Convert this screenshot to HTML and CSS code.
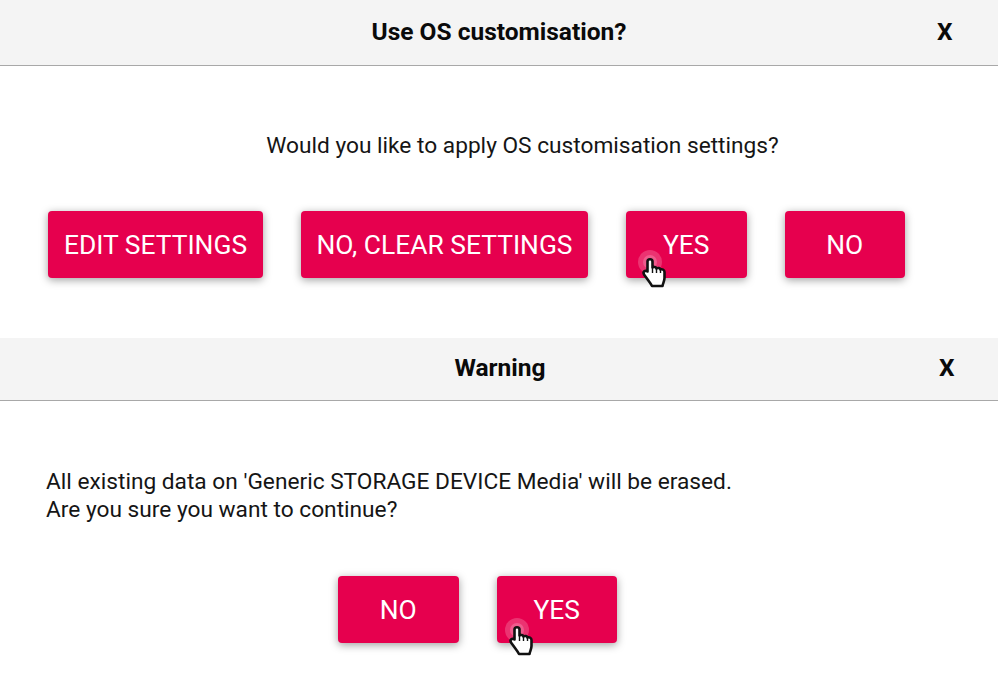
FILE: index.html
```html
<!DOCTYPE html>
<html lang="en">
<head>
<meta charset="utf-8">
<title>Dialogs</title>
<link rel="stylesheet" href="styles.css">
</head>
<body>
<section class="dialog first">
  <header class="head">
    <h2 class="title">Use OS customisation?</h2>
    <span class="close close-a">X</span>
  </header>
  <p class="msg center">Would you like to apply OS customisation settings?</p>
  <div class="actions">
    <button class="btn w-edit">EDIT SETTINGS</button>
    <button class="btn w-clear">NO, CLEAR SETTINGS</button>
    <button class="btn w-std">YES
      <svg class="cursor cursor-a" viewBox="0 0 40 44" aria-hidden="true">
        <circle class="halo" cx="11" cy="11" r="12"/>
        <circle class="halo" cx="11" cy="11" r="7"/>
        <path class="hand" d="M9 29 L5 23.500 C3.500 20.500 6 19 8.500 20.500 L8.500 10.500 C8.500 7.500 13.500 7.500 13.500 10.500 L13.500 16.500 C15 15.500 17 16 17.500 17.500 C19 16.500 21 17 21.500 18.500 C23 18 25.500 18.500 25.500 21 L25.500 27 C25.500 30 24 32 23.500 35 L13 35 C12 33 10.500 31 9 29 Z"/>
        <path class="fold" d="M13.500 16.500 L13.500 22 M17.500 17.500 L17.500 22 M21.500 18.500 L21.500 22"/>
      </svg>
    </button>
    <button class="btn w-std">NO</button>
  </div>
</section>
<section class="dialog second">
  <header class="head">
    <h2 class="title">Warning</h2>
    <span class="close close-b">X</span>
  </header>
  <p class="msg left">All existing data on 'Generic STORAGE DEVICE Media' will be erased.<br>Are you sure you want to continue?</p>
  <div class="actions">
    <button class="btn w-std">NO</button>
    <button class="btn w-std">YES
      <svg class="cursor cursor-b" viewBox="0 0 40 44" aria-hidden="true">
        <circle class="halo" cx="11" cy="11" r="12"/>
        <circle class="halo" cx="11" cy="11" r="7"/>
        <path class="hand" d="M9 29 L5 23.500 C3.500 20.500 6 19 8.500 20.500 L8.500 10.500 C8.500 7.500 13.500 7.500 13.500 10.500 L13.500 16.500 C15 15.500 17 16 17.500 17.500 C19 16.500 21 17 21.500 18.500 C23 18 25.500 18.500 25.500 21 L25.500 27 C25.500 30 24 32 23.500 35 L13 35 C12 33 10.500 31 9 29 Z"/>
        <path class="fold" d="M13.500 16.500 L13.500 22 M17.500 17.500 L17.500 22 M21.500 18.500 L21.500 22"/>
      </svg>
    </button>
  </div>
</section>
</body>
</html>
```
FILE: styles.css
```css
html, body { margin: 0; padding: 0; background: #fff; }
body { font-family: Roboto, "Liberation Sans", sans-serif; color: #111; width: 998px; height: 673px; overflow: hidden; }
.dialog { display: flex; flex-direction: column; }
.first { height: 338px; }
.head { position: relative; display: flex; align-items: center; justify-content: center; background: #f4f4f4; border-bottom: 1px solid #a8a8a8; }
.first .head { height: 65px; }
.second .head { height: 62px; }
.first .title { margin-top: -2px; }
.second .title { margin: -4px 0 0 2px; }
.title { margin: 0; font-size: 24.5px; font-weight: 700; color: #0a0a0a; }
.close { position: absolute; top: 50%; transform: translateY(-50%); font-size: 24.5px; font-weight: 700; color: #0a0a0a; }
.close-a { left: 937px; margin-top: -2px; }
.close-b { left: 939px; margin-top: -2px; }
.msg { margin: 0; font-size: 22.7px; line-height: 28px; color: #151515; }
.center { text-align: center; padding: 66px 0 0 47px; height: 79px; }
.left { padding: 67px 0 0 46px; }
.actions { display: flex; gap: 38px; padding-left: 48px; }
.second .actions { margin-top: 52px; padding-left: 338px; }
.btn { position: relative; height: 67px; padding: 0; border: 0; border-radius: 4px; background: #e6004e; color: #fff; font-family: Roboto, "Liberation Sans", sans-serif; font-size: 26.4px; font-weight: 400; box-shadow: 0 2px 8px rgba(0,0,0,.38); }
.w-edit { width: 215px; }
.w-clear { width: 287px; }
.w-std { width: 120.5px; }
.cursor { position: absolute; width: 40px; height: 44px; overflow: visible; }
.cursor-a { left: 13px; top: 40px; }
.cursor-b { left: 9px; top: 43px; }
.halo { fill: rgba(255,255,255,.2); }
.hand { fill: #fff; stroke: #111; stroke-width: 2.6; stroke-linejoin: round; }
.fold { fill: none; stroke: #111; stroke-width: 1.4; }
```
